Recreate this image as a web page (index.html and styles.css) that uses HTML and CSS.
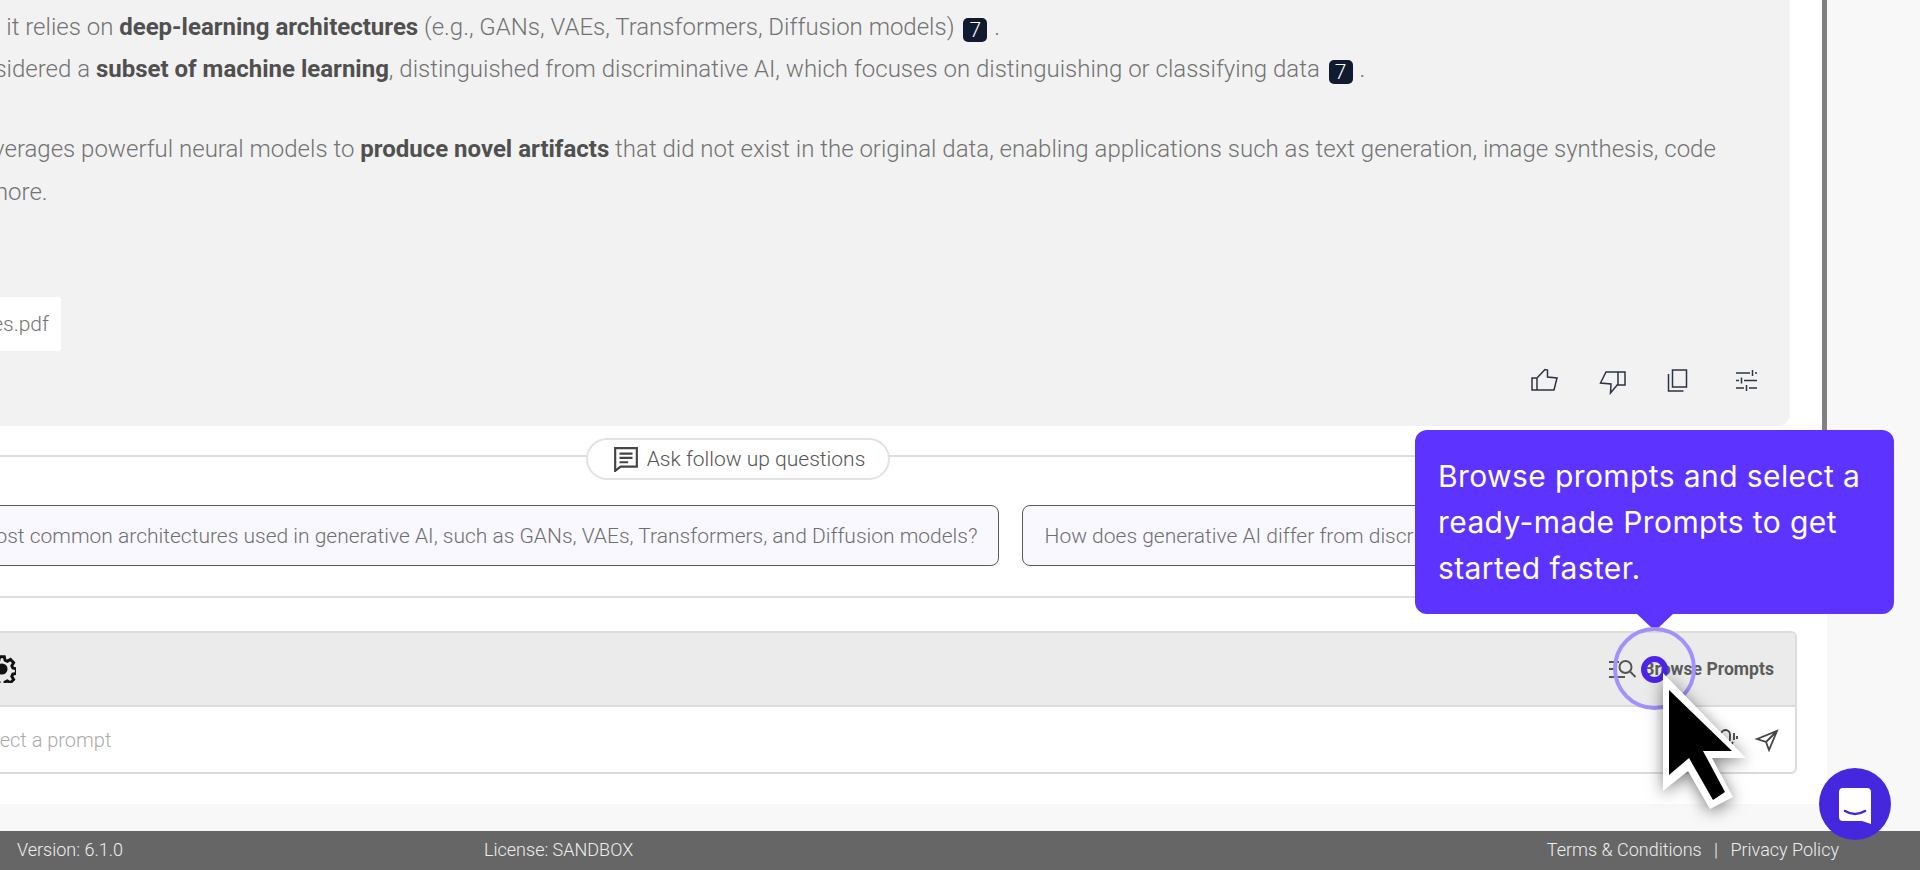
FILE: index.html
```html
<!DOCTYPE html>
<html lang="en">
<head>
<meta charset="utf-8">
<title>Chat</title>
<link rel="stylesheet" href="styles.css">
</head>
<body>
<div class="shell">
  <main class="main">
    <section class="card">
      <p class="line line-a">Specifically, it relies on <b>deep-learning architectures</b> (e.g., GANs, VAEs, Transformers, Diffusion models) <span class="cite">7</span> .</p>
      <p class="line line-b">It is considered a <b>subset of machine learning</b>, distinguished from discriminative AI, which focuses on distinguishing or classifying data <span class="cite">7</span> .</p>
      <p class="line line-c">Generative AI leverages powerful neural models to <b>produce novel artifacts</b> that did not exist in the original data, enabling applications such as text generation, image synthesis, code<br><span class="tail">generation, and more.</span></p>
      <div class="file"><span>generative-ai-use-cases.pdf</span></div>
      <div class="actions">
        <svg class="act" viewBox="0 0 28 28"><path d="M2 11h5v12H2zM7 11l8-8.500 2.500.5v7l9.500 1-3 12H7"/></svg>
        <svg class="act" viewBox="0 0 28 28"><path d="M20 5h7v13h-7zM20 5H8L2.500 16 13 17l-.5 9 7.500-9"/></svg>
        <svg class="act" viewBox="0 0 28 28"><path d="M7.500 3H21.500V20H7.500zM3.500 7V24H18.500"/></svg>
        <svg class="act" viewBox="0 0 28 28"><path d="M3 6h14M22 6h2M19.500 3v6M3 13.500h3M11 13.500h13M8.500 10.500v6M3 21h8M16 21h8M13.500 18v6"/></svg>
      </div>
    </section>
    <div class="follow">
      <span class="pill">
        <svg class="pill-icon" viewBox="0 0 24 24"><path d="M2 2h20v17H7l-5 4zM6 7h12M6 11h12M6 15h8"/></svg>
        Ask follow up questions
      </span>
    </div>
    <div class="chips">
      <button class="chip">What are the most common architectures used in generative AI, such as GANs, VAEs, Transformers, and Diffusion models?</button>
      <button class="chip chip-b">How does generative AI differ from discriminative AI in its goals?</button>
    </div>
    <div class="composer">
      <div class="bar">
        <svg class="gear" viewBox="0 0 24 24"><path d="M10 1.500h4l.6 3 2 .9 2.600-1.600 2.800 2.800-1.600 2.600.9 2 3 .6v4l-3 .6-.9 2 1.600 2.600-2.800 2.800-2.600-1.600-2 .9-.6 3h-4l-.6-3-2-.9-2.600 1.600-2.800-2.800 1.600-2.600-.9-2-3-.6v-4l3-.6.9-2L2 6.600l2.800-2.800 2.600 1.600 2-.9z"/><circle class="hub" cx="12" cy="12" r="3.500"/></svg>
        <span class="browse">
          <svg class="browse-icon" viewBox="0 0 30 24"><path d="M1 5h10M1 12h8M1 20h16"/><circle cx="17.500" cy="10" r="6"/><path d="M22 14.500 27.500 20"/></svg>
          Browse Prompts
        </span>
      </div>
      <div class="entry">
        <span class="placeholder">Type your question or select a prompt</span>
        <svg class="entry-icon" viewBox="0 0 24 24"><rect x="6" y="2" width="9" height="13" rx="4.500"/><path d="M3 11a8 8 0 0 0 15 3M10 19v3M19 5v7M22 8v3"/></svg>
        <svg class="entry-icon" viewBox="0 0 24 24"><path d="M2 11 22 3l-8 19-3-8zM11 14l11-11"/></svg>
      </div>
    </div>
    <div class="thumb"></div>
  </main>
</div>
<footer class="foot">
  <span>Version: 6.1.0</span>
  <span class="license">License: SANDBOX</span>
  <span class="legal">Terms &amp; Conditions <i>|</i> Privacy Policy</span>
</footer>

<div class="tip">Browse prompts and select a ready-made Prompts to get started faster.</div>
<div class="pulse"></div>
<div class="dot"></div>
<svg class="cursor" viewBox="0 0 100 150">
  <path class="cursor-edge" d="M3 3V121L28 101 50 139 73 127 52 88H86z"/>
  <path class="cursor-fill" d="M9 20V105L29 88 53 130 65 122 43 81H72z"/>
</svg>
<div class="fab">
  <svg viewBox="0 0 32 32"><path class="fab-body" d="M4 0h24a4 4 0 0 1 4 4v32l-9-3H4a4 4 0 0 1-4-4V4a4 4 0 0 1 4-4z"/><path class="fab-smile" d="M6 23q10 6 20 0"/></svg>
</div>
</body>
</html>
```

FILE: styles.css
```css
* { box-sizing: border-box; }
html, body { margin: 0; height: 870px; overflow: hidden; }
body {
  width: 1920px;
  position: relative;
  background: #f8f8f8;
  font-family: Roboto, "Liberation Sans", sans-serif;
  display: flex;
  flex-direction: column;
}
.shell { height: 831px; flex: none; }
.main {
  position: relative;
  width: 2227px;
  margin-left: -400px;
  height: 804px;
  background: #fff;
}
.card {
  width: 2190px;
  height: 426px;
  background: #f2f2f2;
  border-radius: 0 0 12px 0;
  padding-top: 6px;
  font-weight: 300;
  font-size: 24px;
  line-height: 42px;
  color: #737373;
  position: relative;
}
.line { margin: 0; white-space: nowrap; }
.line b { font-weight: 700; color: #505050; }
.line-a { padding-left: 279px; }
.line-b { padding-left: 312px; }
.line-c { padding-left: 230.500px; margin-top: 38px; }
.tail { display: inline-block; margin-left: -11px; line-height: 44px; }
.cite {
  display: inline-flex;
  justify-content: center;
  align-items: center;
  width: 24px;
  height: 24px;
  margin: 0 1px 0 3px;
  border-radius: 5px;
  background: #111a2e;
  color: #fff;
  font-size: 21px;
  vertical-align: -2px;
}
.file {
  position: absolute;
  top: 297px;
  right: 1729px;
  height: 54px;
  padding: 0 12px;
  display: flex;
  align-items: center;
  background: #fff;
  font-size: 21px;
  border-radius: 2px;
}
.actions {
  position: absolute;
  right: 29px;
  top: 367px;
  display: flex;
  gap: 39.600px;
}
.act {
  width: 28px;
  height: 28px;
  fill: none;
  stroke: #2b3444;
  stroke-width: 1.500;
}
.follow {
  height: 42px;
  margin-top: 12px;
  display: flex;
  justify-content: center;
  width: 2190px;
  padding-left: 86px;
  background: linear-gradient(#ddd, #ddd) 0 17px / 100% 2px no-repeat;
}
.pill {
  display: flex;
  align-items: center;
  gap: 8px;
  height: 42px;
  padding: 0 23px 0 25px;
  background: #fff;
  border: 2px solid #e2e2e2;
  border-radius: 21px;
  font-size: 21px;
  font-weight: 300;
  color: #555;
}
.pill-icon { width: 26px; height: 26px; fill: none; stroke: #444; stroke-width: 2; }
.chips {
  display: flex;
  gap: 23px;
  justify-content: flex-end;
  width: 2190px;
  margin-top: 25px;
  padding: 0 135px 30px 0;
  border-bottom: 2px solid #e0e0e0;
}
.chip {
  flex: none;
  height: 61px;
  padding: 0 20px;
  background: #f9f8ff;
  border: 1.500px solid #5a5a5a;
  border-radius: 8px;
  font: 300 21px Roboto, sans-serif;
  color: #6f6f6f;
}
.chip-b { padding-left: 22px; }
.composer {
  width: 2197px;
  margin-top: 33px;
  height: 143px;
  border: 2px solid #dcdcdc;
  border-radius: 6px;
  overflow: hidden;
}
.bar {
  height: 74px;
  background: #ebebeb;
  border-bottom: 2px solid #dcdcdc;
  display: flex;
  justify-content: space-between;
  align-items: center;
  padding: 0 21px 0 386px;
}
.gear { width: 28px; height: 28px; fill: none; stroke: #111; stroke-width: 2.500; }
.hub { fill: #111; }
.browse {
  display: flex;
  align-items: center;
  gap: 5px;
  font-size: 17.600px;
  font-weight: 700;
  color: #5c5c5c;
}
.browse-icon { width: 30px; height: 24px; fill: none; stroke: #555; stroke-width: 2; }
.entry {
  height: 67px;
  display: flex;
  align-items: center;
  gap: 16px;
  padding: 0 16px 2px 179px;
}
.placeholder { flex: 1; font-size: 20px; font-weight: 300; color: #aaa; }
.entry-icon { width: 24px; height: 24px; fill: none; stroke: #444; stroke-width: 1.800; }
.thumb {
  position: absolute;
  top: 0;
  right: 0;
  width: 5px;
  height: 560px;
  background: #808080;
}
.foot {
  height: 39px;
  flex: none;
  background: #666;
  color: #eee;
  font-size: 18px;
  font-weight: 300;
  display: flex;
  align-items: center;
  padding: 0 81px 2px 17px;
}
.license { margin-left: 361px; }
.legal { margin-left: auto; }
.legal i { font-style: normal; margin: 0 8px; }
.tip {
  position: absolute;
  left: 1415px;
  top: 430px;
  width: 479px;
  height: 184px;
  padding: 23px 23px;
  background: #5c33ff;
  border-radius: 12px;
  color: #fff;
  font: 400 30px/46px Inter, sans-serif;
  letter-spacing: .4px;
}
.tip::after {
  content: "";
  position: absolute;
  left: 222px;
  bottom: -17px;
  border-left: 18px solid transparent;
  border-right: 18px solid transparent;
  border-top: 17px solid #5c33ff;
}
.pulse {
  position: absolute;
  left: 1613px;
  top: 627px;
  width: 83px;
  height: 83px;
  border: 4px solid #a391fb;
  border-radius: 50%;
}
.dot {
  position: absolute;
  left: 1641px;
  top: 656px;
  width: 27px;
  height: 27px;
  border: 6px solid #4d25e8;
  border-radius: 50%;
}
.cursor {
  position: absolute;
  left: 1660px;
  top: 670px;
  width: 100px;
  height: 150px;
  filter: drop-shadow(0 3px 8px rgba(0, 0, 0, .5));
}
.cursor-edge { fill: #fff; }
.cursor-fill { fill: #000; }
.fab {
  position: absolute;
  left: 1819px;
  top: 768px;
  width: 72px;
  height: 72px;
  border-radius: 50%;
  background: #4527dd;
  display: flex;
  justify-content: center;
  align-items: center;
}
.fab svg { width: 32px; height: 36px; overflow: visible; }
.fab-body { fill: #fff; }
.fab-smile { fill: none; stroke: #4527dd; stroke-width: 2.500; stroke-linecap: round; }
```
